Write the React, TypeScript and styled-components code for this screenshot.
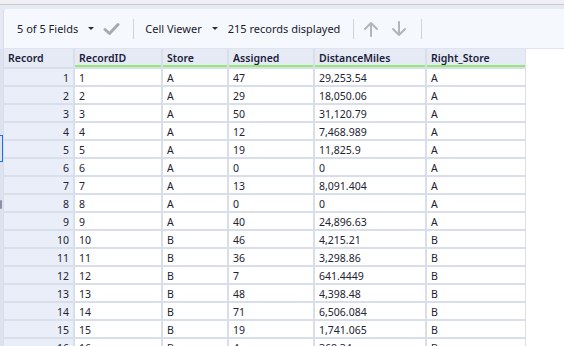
import React from "react";
import styled, { createGlobalStyle } from "styled-components";

const Global = createGlobalStyle`
  html, body { margin: 0; padding: 0; background: #ffffff; overflow: hidden; }
  body { font-family: "Noto Sans", "Open Sans", sans-serif; font-size: 11px; color: #1f1f2e; }
`;

const Page = styled.div`
  width: 564px;
  height: 346px;
  overflow: hidden;
  display: flex;
  flex-direction: column;
`;

const TopEdge = styled.div`
  flex: none;
  height: 4px;
  background: #f0f0f4;
  border-bottom: 1px solid #c9c9cf;
`;

const Frame = styled.div`
  flex: none;
  background: #e6e9f2;
  padding: 4px 0 0 3px;
`;

const Toolbar = styled.div`
  height: 39px;
  background: #f5f8fd;
  border-left: 1px solid #d6dbe6;
  border-bottom: 1px solid #dfe4ee;
  border-top-left-radius: 3px;
  display: flex;
  align-items: center;
  padding-left: 13px;
`;

const Label = styled.span<{ $ml?: number }>`
  margin-left: ${(p) => p.$ml ?? 0}px;
  font-size: 11px;
  color: #1a1a2e;
  white-space: nowrap;
`;

const Caret = styled.span<{ $ml: number }>`
  margin-left: ${(p) => p.$ml}px;
  width: 0;
  height: 0;
  border-left: 3px solid transparent;
  border-right: 3px solid transparent;
  border-top: 3px solid #2a2a3a;
`;

const Sep = styled.span<{ $ml: number }>`
  margin-left: ${(p) => p.$ml}px;
  width: 1px;
  height: 20px;
  background: #cfd2d8;
`;

const Icon = styled.svg<{ $ml: number }>`
  margin-left: ${(p) => p.$ml}px;
  flex: none;
`;

const Body = styled.div`
  flex: none;
  display: flex;
  align-items: flex-start;
`;

const Rail = styled.div`
  position: relative;
  width: 3px;
  align-self: stretch;
  background: #dde3ee;
`;

const Selection = styled.div`
  position: absolute;
  left: -1px;
  top: 86px;
  width: 3px;
  height: 25px;
  border: 1px solid #1473e6;
  border-left: none;
`;

const Dot = styled.div`
  position: absolute;
  left: 0;
  top: 151px;
  width: 2px;
  height: 9px;
  background: #8a93a6;
  border-radius: 1px;
`;

const Table = styled.div`
  display: grid;
  grid-template-columns: 69px 86px 64px 84px 110px 98px;
  grid-template-rows: 18px;
  grid-auto-rows: 16px;
  gap: 2px;
  background: #d8deea;
  padding: 0 1px 0 1px;
`;

const HeadCell = styled.div<{ $accent: boolean }>`
  background: #e5eaf5;
  box-sizing: border-box;
  border-bottom: 2px solid ${(p) => (p.$accent ? "#94ea74" : "#e5eaf5")};
  padding: 0 4px 0 4px;
  font-weight: 600;
  font-size: 10.5px;
  line-height: 18px;
  color: #1b1d3a;
  white-space: nowrap;
  overflow: hidden;
`;

const Cell = styled.div<{ $index?: boolean }>`
  background: ${(p) => (p.$index ? "#e9eef8" : "#ffffff")};
  text-align: ${(p) => (p.$index ? "right" : "left")};
  padding: 0 4px;
  font-size: 10.5px;
  line-height: 18px;
  color: #222230;
  white-space: nowrap;
  overflow: hidden;
`;

const columns = ["Record", "RecordID", "Store", "Assigned", "DistanceMiles", "Right_Store"];

const rows: [string, string, string, string][] = [
  ["A", "47", "29,253.54", "A"],
  ["A", "29", "18,050.06", "A"],
  ["A", "50", "31,120.79", "A"],
  ["A", "12", "7,468.989", "A"],
  ["A", "19", "11,825.9", "A"],
  ["A", "0", "0", "A"],
  ["A", "13", "8,091.404", "A"],
  ["A", "0", "0", "A"],
  ["A", "40", "24,896.63", "A"],
  ["B", "46", "4,215.21", "B"],
  ["B", "36", "3,298.86", "B"],
  ["B", "7", "641.4449", "B"],
  ["B", "48", "4,398.48", "B"],
  ["B", "71", "6,506.084", "B"],
  ["B", "19", "1,741.065", "B"],
  ["B", "4", "368.34", "B"],
];

const Check = () => (
  <Icon $ml={9} width="17" height="14" viewBox="0 0 17 14">
    <path d="M2 7.5 L6.5 11.5 L15 2.5" fill="none" stroke="#a9a9ad" strokeWidth="3" strokeLinecap="round" strokeLinejoin="round" />
  </Icon>
);

const Arrow = ({ up, ml }: { up: boolean; ml: number }) => (
  <Icon $ml={ml} width="16" height="16" viewBox="0 0 16 16" style={up ? undefined : { transform: "rotate(180deg)" }}>
    <path d="M8 15 V2 M2 8 L8 2 L14 8" fill="none" stroke="#b3b5ba" strokeWidth="2" strokeLinecap="round" strokeLinejoin="round" />
  </Icon>
);

export default function App() {
  return (
    <Page>
      <Global />
      <TopEdge />
      <Frame>
        <Toolbar>
          <Label $ml={0}>5 of 5 Fields</Label>
          <Caret $ml={10} />
          <Check />
          <Sep $ml={13} />
          <Label $ml={11}>Cell Viewer</Label>
          <Caret $ml={10} />
          <Label $ml={10}>215 records displayed</Label>
          <Sep $ml={13} />
          <Arrow up ml={9} />
          <Arrow up={false} ml={12} />
          <Sep $ml={14} />
        </Toolbar>
      </Frame>
      <Body>
        <Rail>
          <Selection />
          <Dot />
        </Rail>
        <Table>
          {columns.map((c, i) => (
            <HeadCell key={c} $accent={i > 0}>
              {c}
            </HeadCell>
          ))}
          {rows.map((r, i) => (
            <React.Fragment key={i}>
              <Cell $index>{i + 1}</Cell>
              <Cell>{i + 1}</Cell>
              <Cell>{r[0]}</Cell>
              <Cell>{r[1]}</Cell>
              <Cell>{r[2]}</Cell>
              <Cell>{r[3]}</Cell>
            </React.Fragment>
          ))}
        </Table>
      </Body>
    </Page>
  );
}
